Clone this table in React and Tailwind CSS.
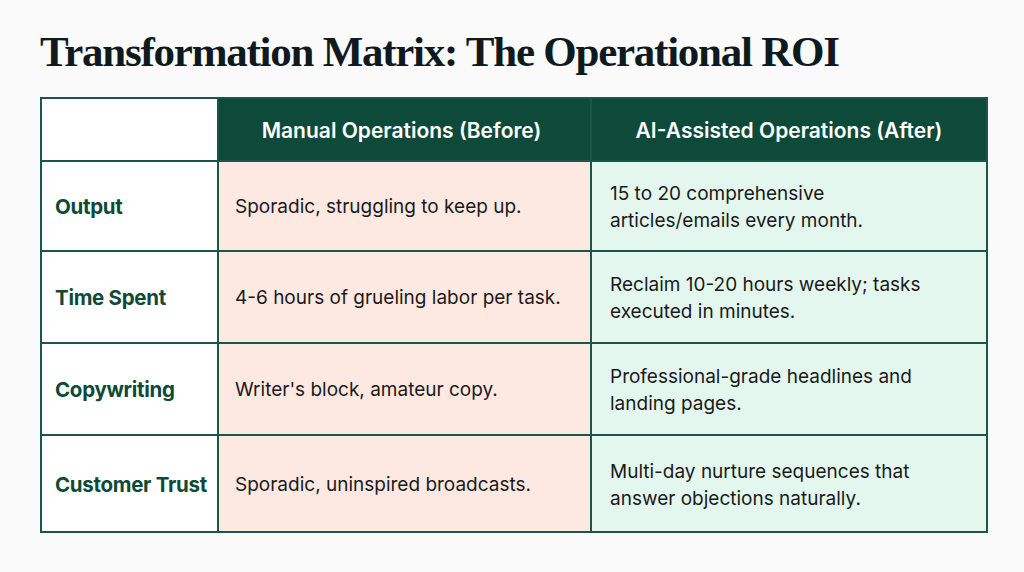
const rows = [
  {
    label: "Output",
    before: "Sporadic, struggling to keep up.",
    after: ["15 to 20 comprehensive", "articles/emails every month."],
    h: "h-[90px]",
  },
  {
    label: "Time Spent",
    before: "4-6 hours of grueling labor per task.",
    after: ["Reclaim 10-20 hours weekly; tasks", "executed in minutes."],
    h: "h-[92px]",
  },
  {
    label: "Copywriting",
    before: "Writer's block, amateur copy.",
    after: ["Professional-grade headlines and", "landing pages."],
    h: "h-[92px]",
  },
  {
    label: "Customer Trust",
    before: "Sporadic, uninspired broadcasts.",
    after: ["Multi-day nurture sequences that", "answer objections naturally."],
    h: "h-[97px]",
  },
];

const App = () => {
  return (
    <div className="w-[1024px] h-[572px] bg-[#fafafa] overflow-hidden">
      <div className="pl-[40px] pt-[26px]">
        <h1 className="font-['Liberation_Serif',serif] font-bold text-[43px] leading-[52px] text-[#101a1e] tracking-[-1.25px]">
          Transformation Matrix: The Operational ROI
        </h1>
        <table className="mt-[19px] border-collapse border-2 border-[#1d5646] font-['Inter',sans-serif] text-[19px]">
          <thead>
            <tr className="h-[63px]">
              <th className="w-[177px] bg-white border-2 border-[#1d5646]"></th>
              <th className="w-[373px] bg-[#0d4a39] border-y-2 border-l-2 border-r border-[#1d5646] border-r-[#8fb3a6] text-white font-semibold text-[21px] text-center pt-[3px] pr-[6px]">
                Manual Operations (Before)
              </th>
              <th className="w-[396px] bg-[#0d4a39] border-2 border-[#1d5646] text-white font-semibold text-[21px] text-center pt-[3px]">
                AI-Assisted Operations (After)
              </th>
            </tr>
          </thead>
          <tbody>
            {rows.map((r) => (
              <tr key={r.label} className={r.h}>
                <td className="bg-white border-2 border-[#1d5646] pl-[13px] pt-[3px] font-bold text-[20.5px] text-[#0f4a38] tracking-[-0.3px]">
                  {r.label}
                </td>
                <td className="bg-[#fde9e1] border-2 border-[#1d5646] pl-[16px] pt-[3px] text-[#1a1a1a]">
                  {r.before}
                </td>
                <td className="bg-[#e3f7ee] border-2 border-[#1d5646] pl-[18px] pt-[2px] text-[#1a1a1a] leading-[27px]">
                  {r.after.map((l) => (
                    <div key={l}>{l}</div>
                  ))}
                </td>
              </tr>
            ))}
          </tbody>
        </table>
      </div>
    </div>
  );
};

export default App;
